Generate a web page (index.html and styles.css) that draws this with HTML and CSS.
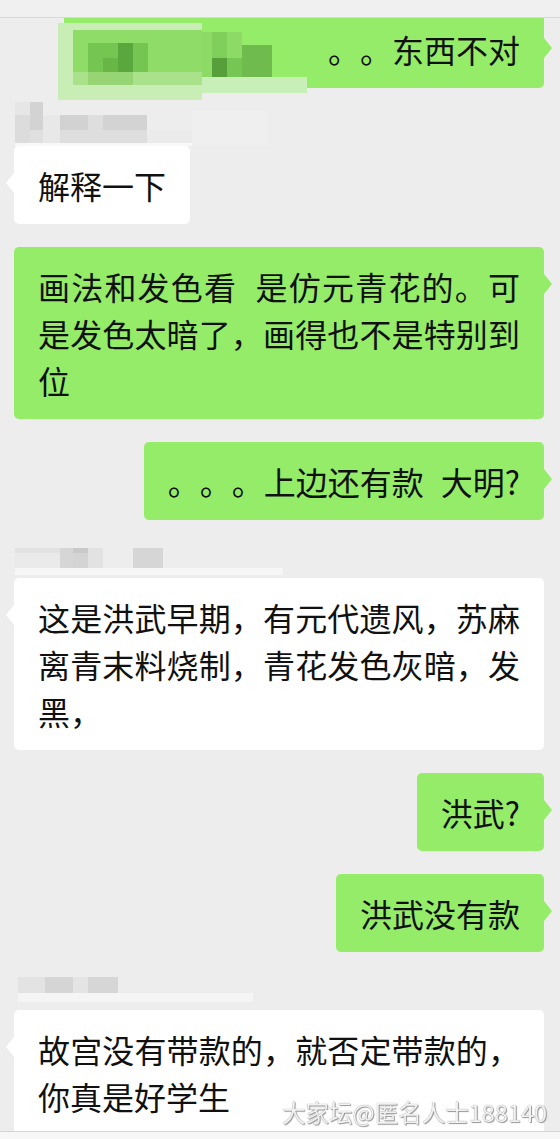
FILE: index.html
```html
<!DOCTYPE html>
<html lang="zh-CN">
<head>
    <meta charset="UTF-8">
    <meta name="viewport" content="width=device-width, initial-scale=1.0">
    <title>聊天记录</title>
    <link rel="stylesheet" href="styles.css">
</head>
<body>
    <div class="topbar"></div>
    <div class="chat">
        <div class="row out first">
            <div class="bubble cut">。。东西不对</div>
            <!-- privacy mosaic over the start of the message -->
            <svg class="mosaic" width="250" height="70" viewBox="0 0 250 70">
                <rect x="0" y="0" width="144" height="77" fill="#c8eeb5"/>
                <rect x="15" y="7" width="129" height="42" fill="#8fdc69"/>
                <rect x="30" y="20" width="60" height="29" fill="#74c551"/>
                <rect x="60" y="20" width="15" height="29" fill="#5aa83d"/>
                <rect x="45" y="35" width="15" height="14" fill="#68b646"/>
                <rect x="15" y="49" width="129" height="13" fill="#a9e28b"/>
                <rect x="30" y="49" width="45" height="13" fill="#96d474"/>
                <rect x="144" y="9" width="40" height="45" fill="#8ddb66"/>
                <rect x="154" y="9" width="15" height="26" fill="#80cf5c"/>
                <rect x="154" y="35" width="15" height="19" fill="#579f3b"/>
                <rect x="169" y="35" width="15" height="19" fill="#76c653"/>
                <rect x="184" y="22" width="30" height="32" fill="#6fbb4e"/>
                <rect x="144" y="54" width="105" height="16" fill="#c9efb8"/>
            </svg>
        </div>

        <div class="name">
            <svg width="300" height="58" viewBox="0 0 300 58">
                <rect x="192" y="22" width="76" height="35" fill="#efefef"/>
                <rect x="15" y="14" width="15" height="13" fill="#e6e6e6"/>
                <rect x="15" y="27" width="15" height="28" fill="#dcdcdc"/>
                <rect x="30" y="14" width="13" height="28" fill="#d3d3d3"/>
                <rect x="30" y="42" width="13" height="13" fill="#e0e0e0"/>
                <rect x="43" y="27" width="17" height="28" fill="#e8e8e8"/>
                <rect x="60" y="27" width="28" height="15" fill="#d2d2d2"/>
                <rect x="88" y="27" width="15" height="15" fill="#dedede"/>
                <rect x="103" y="27" width="44" height="15" fill="#d3d3d3"/>
                <rect x="60" y="42" width="87" height="13" fill="#dedede"/>
                <rect x="147" y="42" width="45" height="13" fill="#ebebeb"/>
                <rect x="15" y="55" width="177" height="3" fill="#f8f8f8"/>
            </svg>
        </div>
        <div class="row in">
            <div class="bubble">解释一下</div>
        </div>

        <div class="row out">
            <div class="bubble">画法和发色看 是仿元青花的。可是发色太暗了，画得也不是特别到位</div>
        </div>
        <div class="row out">
            <div class="bubble">。。。上边还有款 大明?</div>
        </div>

        <div class="name">
            <svg width="300" height="58" viewBox="0 0 300 58">
                <rect x="15" y="28" width="45" height="5" fill="#e2e2e2"/>
                <rect x="15" y="33" width="45" height="15" fill="#eaeaea"/>
                <rect x="60" y="28" width="13" height="20" fill="#d6d6d6"/>
                <rect x="73" y="28" width="15" height="5" fill="#c9c9c9"/>
                <rect x="73" y="33" width="15" height="15" fill="#d4d4d4"/>
                <rect x="88" y="28" width="15" height="20" fill="#e2e2e2"/>
                <rect x="133" y="28" width="30" height="20" fill="#d6d6d6"/>
                <rect x="15" y="48" width="268" height="7" fill="#f6f6f6"/>
            </svg>
        </div>
        <div class="row in">
            <div class="bubble">这是洪武早期，有元代遗风，苏麻离青末料烧制，青花发色灰暗，发黑，</div>
        </div>

        <div class="row out">
            <div class="bubble">洪武?</div>
        </div>
        <div class="row out">
            <div class="bubble">洪武没有款</div>
        </div>

        <div class="name">
            <svg width="300" height="58" viewBox="0 0 300 58">
                <rect x="18" y="25" width="27" height="16" fill="#e3e3e3"/>
                <rect x="45" y="25" width="28" height="16" fill="#d5d5d5"/>
                <rect x="73" y="25" width="15" height="16" fill="#e4e4e4"/>
                <rect x="88" y="25" width="30" height="16" fill="#d6d6d6"/>
                <rect x="18" y="41" width="235" height="9" fill="#f5f5f5"/>
            </svg>
        </div>
        <div class="row in">
            <div class="bubble">故宫没有带款的，就否定带款的，你真是好学生</div>
        </div>
    </div>
    <div class="bottombar"></div>
    <div class="watermark">大家坛@匿名人士188140</div>
</body>
</html>
```

FILE: styles.css
```css
body {
    margin: 0;
    height: 1139px;
    overflow: hidden;
    background-color: #ededed;
    font-family: "Noto Sans CJK SC", "Noto Sans", sans-serif;
    color: #111;
}
.topbar {
    height: 17px;
    background-color: #f0f0f0;
    border-bottom: 1px solid #d8d8d8;
}
.chat {
    padding: 0 16px 0 14px;
}
.row {
    display: flex;
    margin-top: 23px;
}
.row.first,
.name + .row {
    margin-top: 0;
}
.row.out {
    justify-content: flex-end;
}
.row.in {
    justify-content: flex-start;
}
.first {
    position: relative;
}
.bubble {
    position: relative;
    box-sizing: border-box;
    max-width: 530px;
    padding: 15.5px 24px;
    font-size: 32px;
    line-height: 47px;
    word-spacing: 10px;
    text-align: justify;
    text-justify: inter-character;
    text-spacing-trim: space-all;
    border-radius: 5px;
}
.out .bubble {
    background-color: #95ec69;
}
.in .bubble {
    background-color: #fff;
}
.bubble::after {
    content: "";
    position: absolute;
    top: 27px;
    border-top: 10px solid transparent;
    border-bottom: 10px solid transparent;
}
.out .bubble::after {
    right: -8px;
    border-left: 8px solid #95ec69;
}
.in .bubble::after {
    left: -8px;
    border-right: 8px solid #fff;
}
.bubble.cut {
    width: 480px;
    text-align: right;
    padding-top: 7.5px;
    border-top-left-radius: 0;
    border-top-right-radius: 0;
}
.bubble.cut::after {
    top: 20px;
}
.mosaic {
    position: absolute;
    left: 44px;
    top: 5px;
    overflow: visible;
}
.name {
    height: 58px;
}
.name svg {
    display: block;
    margin-left: -14px;
}
.bottombar {
    position: fixed;
    left: 0;
    right: 0;
    bottom: 0;
    height: 7px;
    background-color: #f7f7f7;
    border-top: 1px solid #d4d4d4;
}
.watermark {
    position: fixed;
    right: 13px;
    bottom: 15px;
    font-size: 23.5px;
    line-height: 1;
    color: #f2f2f2;
    text-shadow: 0 0 1px #777, 1px 1px 1px #9a9a9a;
    white-space: nowrap;
}
```
